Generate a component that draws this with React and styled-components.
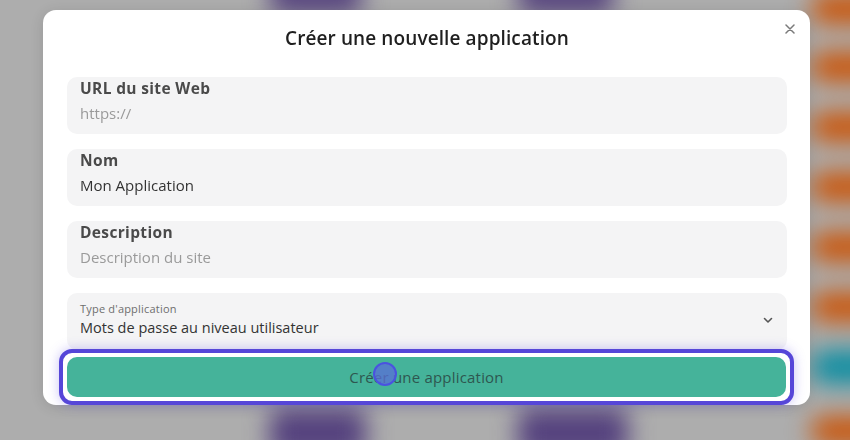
import React from "react";
import styled, { createGlobalStyle } from "styled-components";

const Global = createGlobalStyle`
  html, body { margin: 0; padding: 0; }
  body {
    width: 850px;
    height: 440px;
    overflow: hidden;
    background: #adadad;
    font-family: "Open Sans", "Liberation Sans", sans-serif;
  }
`;

const Page = styled.div`
  position: relative;
  width: 850px;
  height: 440px;
  overflow: hidden;
  padding: 10px 0 0 43px;
  box-sizing: border-box;
`;

const Backdrop = styled.div`
  position: absolute;
  inset: 0;
  z-index: 0;
  filter: blur(12px);
`;

const Blob = styled.div`
  position: absolute;
  background: ${(p) => p.$color};
  border-radius: 10px;
`;

const Modal = styled.div`
  position: relative;
  z-index: 1;
  width: 767px;
  height: 395px;
  background: #ffffff;
  border-radius: 13px;
  box-shadow: 0 2px 14px rgba(0, 0, 0, 0.12);
  padding: 0 23px 0 24px;
  box-sizing: border-box;
  display: flex;
  flex-direction: column;
`;

const Header = styled.div`
  height: 56px;
  display: flex;
  align-items: center;
  justify-content: center;
`;

const Title = styled.h2`
  margin: 0;
  font-size: 19px;
  font-weight: 600;
  color: #1f1f1f;
  letter-spacing: 0.1px;
`;

const Close = styled.button`
  position: absolute;
  top: 12px;
  right: 13px;
  width: 14px;
  height: 14px;
  padding: 0;
  border: 0;
  background: none;
  display: flex;
  align-items: center;
  justify-content: center;
`;

const Form = styled.div`
  margin-top: 11px;
  display: flex;
  flex-direction: column;
  gap: 15px;
`;

const Field = styled.div`
  height: 57px;
  box-sizing: border-box;
  background: #f4f4f5;
  border-radius: 10px;
  padding: ${(p) => (p.$select ? "9px 13px 0" : "2px 13px 0")};
  position: relative;
  display: flex;
  flex-direction: column;
`;

const Label = styled.div`
  font-size: 15.5px;
  line-height: 19px;
  font-weight: 700;
  color: #4a4a4a;
  letter-spacing: 0.35px;
`;

const SmallLabel = styled.div`
  font-size: 11px;
  line-height: 14px;
  color: #6e6e6e;
  letter-spacing: 0.2px;
`;

const Value = styled.div`
  margin-top: ${(p) => (p.$tight ? "3px" : "5px")};
  font-size: ${(p) => (p.$tight ? "14.5px" : "15px")};
  line-height: ${(p) => (p.$tight ? "18px" : "20px")};
  color: ${(p) => (p.$placeholder ? "#9a9a9a" : "#333333")};
`;

const Chevron = styled.svg`
  position: absolute;
  right: 14px;
  top: 24px;
`;

const Ring = styled.div`
  margin: -1px -7px 0 -8px;
  padding: 4px;
  border: 4px solid #5646d8;
  border-radius: 13px;
  background: #ffffff;
  box-shadow: 0 0 12px rgba(100, 80, 230, 0.35);
  position: relative;
`;

const SubmitButton = styled.button`
  width: 100%;
  height: 40px;
  border: 0;
  border-radius: 10px;
  background: #45b39a;
  color: #2e5750;
  font-family: "Open Sans", "Liberation Sans", sans-serif;
  font-size: 15px;
  letter-spacing: 0.2px;
  display: flex;
  align-items: center;
  justify-content: center;
`;

const Cursor = styled.div`
  position: absolute;
  left: 310px;
  top: 9px;
  width: 20px;
  height: 20px;
  border-radius: 50%;
  border: 2px solid #4a52e0;
  background: rgba(90, 110, 215, 0.75);
`;

const stripes = [2, 60, 120, 180, 240, 300, 424];

export default function App() {
  return (
    <>
      <Global />
      <Page>
        <Backdrop>
          <Blob $color="#55427e" style={{ left: 270, top: -24, width: 92, height: 38 }} />
          <Blob $color="#55427e" style={{ left: 518, top: -24, width: 96, height: 38 }} />
          <Blob $color="#55427e" style={{ left: 270, top: 408, width: 96, height: 50 }} />
          <Blob $color="#55427e" style={{ left: 518, top: 408, width: 110, height: 50 }} />
          {stripes.map((y) => (
            <Blob key={y} $color="#c9560c" style={{ left: 812, top: y - 8, width: 70, height: 30 }} />
          ))}
          <Blob $color="#0f8ea2" style={{ left: 812, top: 350, width: 70, height: 34 }} />
        </Backdrop>
        <Modal>
          <Header>
            <Title>Créer une nouvelle application</Title>
          </Header>
          <Close aria-label="Fermer">
            <svg width="10" height="10" viewBox="0 0 10 10">
              <path d="M1 1L9 9M9 1L1 9" stroke="#7a7a7a" strokeWidth="1.5" strokeLinecap="round" />
            </svg>
          </Close>
          <Form>
            <Field>
              <Label>URL du site Web</Label>
              <Value $placeholder>https://</Value>
            </Field>
            <Field>
              <Label>Nom</Label>
              <Value>Mon Application</Value>
            </Field>
            <Field>
              <Label>Description</Label>
              <Value $placeholder>Description du site</Value>
            </Field>
            <Field $select>
              <SmallLabel>Type d'application</SmallLabel>
              <Value $tight>Mots de passe au niveau utilisateur</Value>
              <Chevron width="10" height="7" viewBox="0 0 10 7">
                <path d="M1.5 1.5L5 5L8.5 1.5" fill="none" stroke="#555" strokeWidth="1.6" strokeLinecap="round" strokeLinejoin="round" />
              </Chevron>
            </Field>
          </Form>
          <Ring>
            <SubmitButton>Créer une application</SubmitButton>
            <Cursor />
          </Ring>
        </Modal>
      </Page>
    </>
  );
}
